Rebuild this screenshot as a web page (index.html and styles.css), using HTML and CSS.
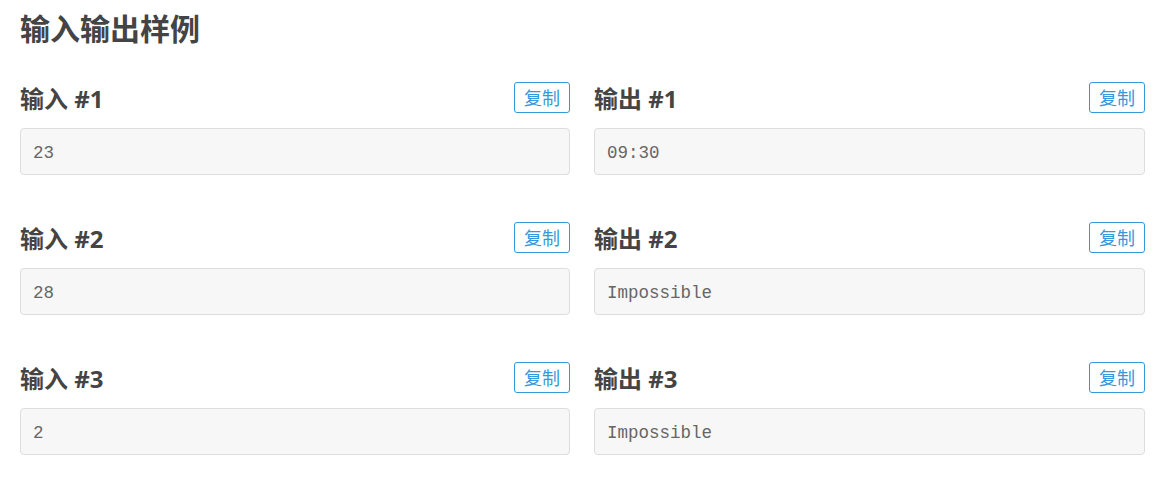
FILE: index.html
```html
<!DOCTYPE html>
<html lang="zh">
<head>
<meta charset="utf-8">
<link rel="stylesheet" href="styles.css">
</head>
<body>
<h2 class="title">输入输出样例</h2>
<div class="grid">
  <div class="sample">
    <div class="head"><h3>输入 #1</h3><button class="copy">复制</button></div>
    <pre class="box">23</pre>
  </div>
  <div class="sample">
    <div class="head"><h3>输出 #1</h3><button class="copy">复制</button></div>
    <pre class="box">09:30</pre>
  </div>
  <div class="sample">
    <div class="head"><h3>输入 #2</h3><button class="copy">复制</button></div>
    <pre class="box">28</pre>
  </div>
  <div class="sample">
    <div class="head"><h3>输出 #2</h3><button class="copy">复制</button></div>
    <pre class="box">Impossible</pre>
  </div>
  <div class="sample">
    <div class="head"><h3>输入 #3</h3><button class="copy">复制</button></div>
    <pre class="box">2</pre>
  </div>
  <div class="sample">
    <div class="head"><h3>输出 #3</h3><button class="copy">复制</button></div>
    <pre class="box">Impossible</pre>
  </div>
</div>
</body>
</html>
```
FILE: styles.css
```css
html, body {
  margin: 0;
  padding: 0;
  background: #fff;
}
body {
  padding: 0 20px;
  font-family: "Open Sans", "Noto Sans CJK SC", sans-serif;
  color: #444;
}
.title {
  margin: 0;
  padding-top: 9px;
  font-size: 30px;
  line-height: 40px;
  font-weight: 700;
  color: #444;
}
.grid {
  display: grid;
  grid-template-columns: 550px 551px;
  column-gap: 24px;
  row-gap: 47px;
  margin-top: 33px;
}
.head {
  display: flex;
  justify-content: space-between;
  align-items: flex-end;
  height: 31px;
}
.head h3 {
  margin: 0;
  font-size: 24px;
  line-height: 29px;
  font-weight: 700;
  color: #444;
}
.copy {
  font-family: "Noto Sans CJK SC", sans-serif;
  font-size: 18px;
  line-height: 23px;
  height: 31px;
  padding: 0 9px;
  border: 1px solid #3498db;
  border-radius: 3px;
  background: #fff;
  color: #3498db;
}
.box {
  margin: 15px 0 0;
  height: 47px;
  box-sizing: border-box;
  padding: 2px 12px 0;
  line-height: 45px;
  border: 1px solid #ddd;
  border-radius: 4px;
  background: #f7f7f7;
  font-family: "Liberation Mono", monospace;
  font-size: 17.5px;
  color: #666;
}
```
